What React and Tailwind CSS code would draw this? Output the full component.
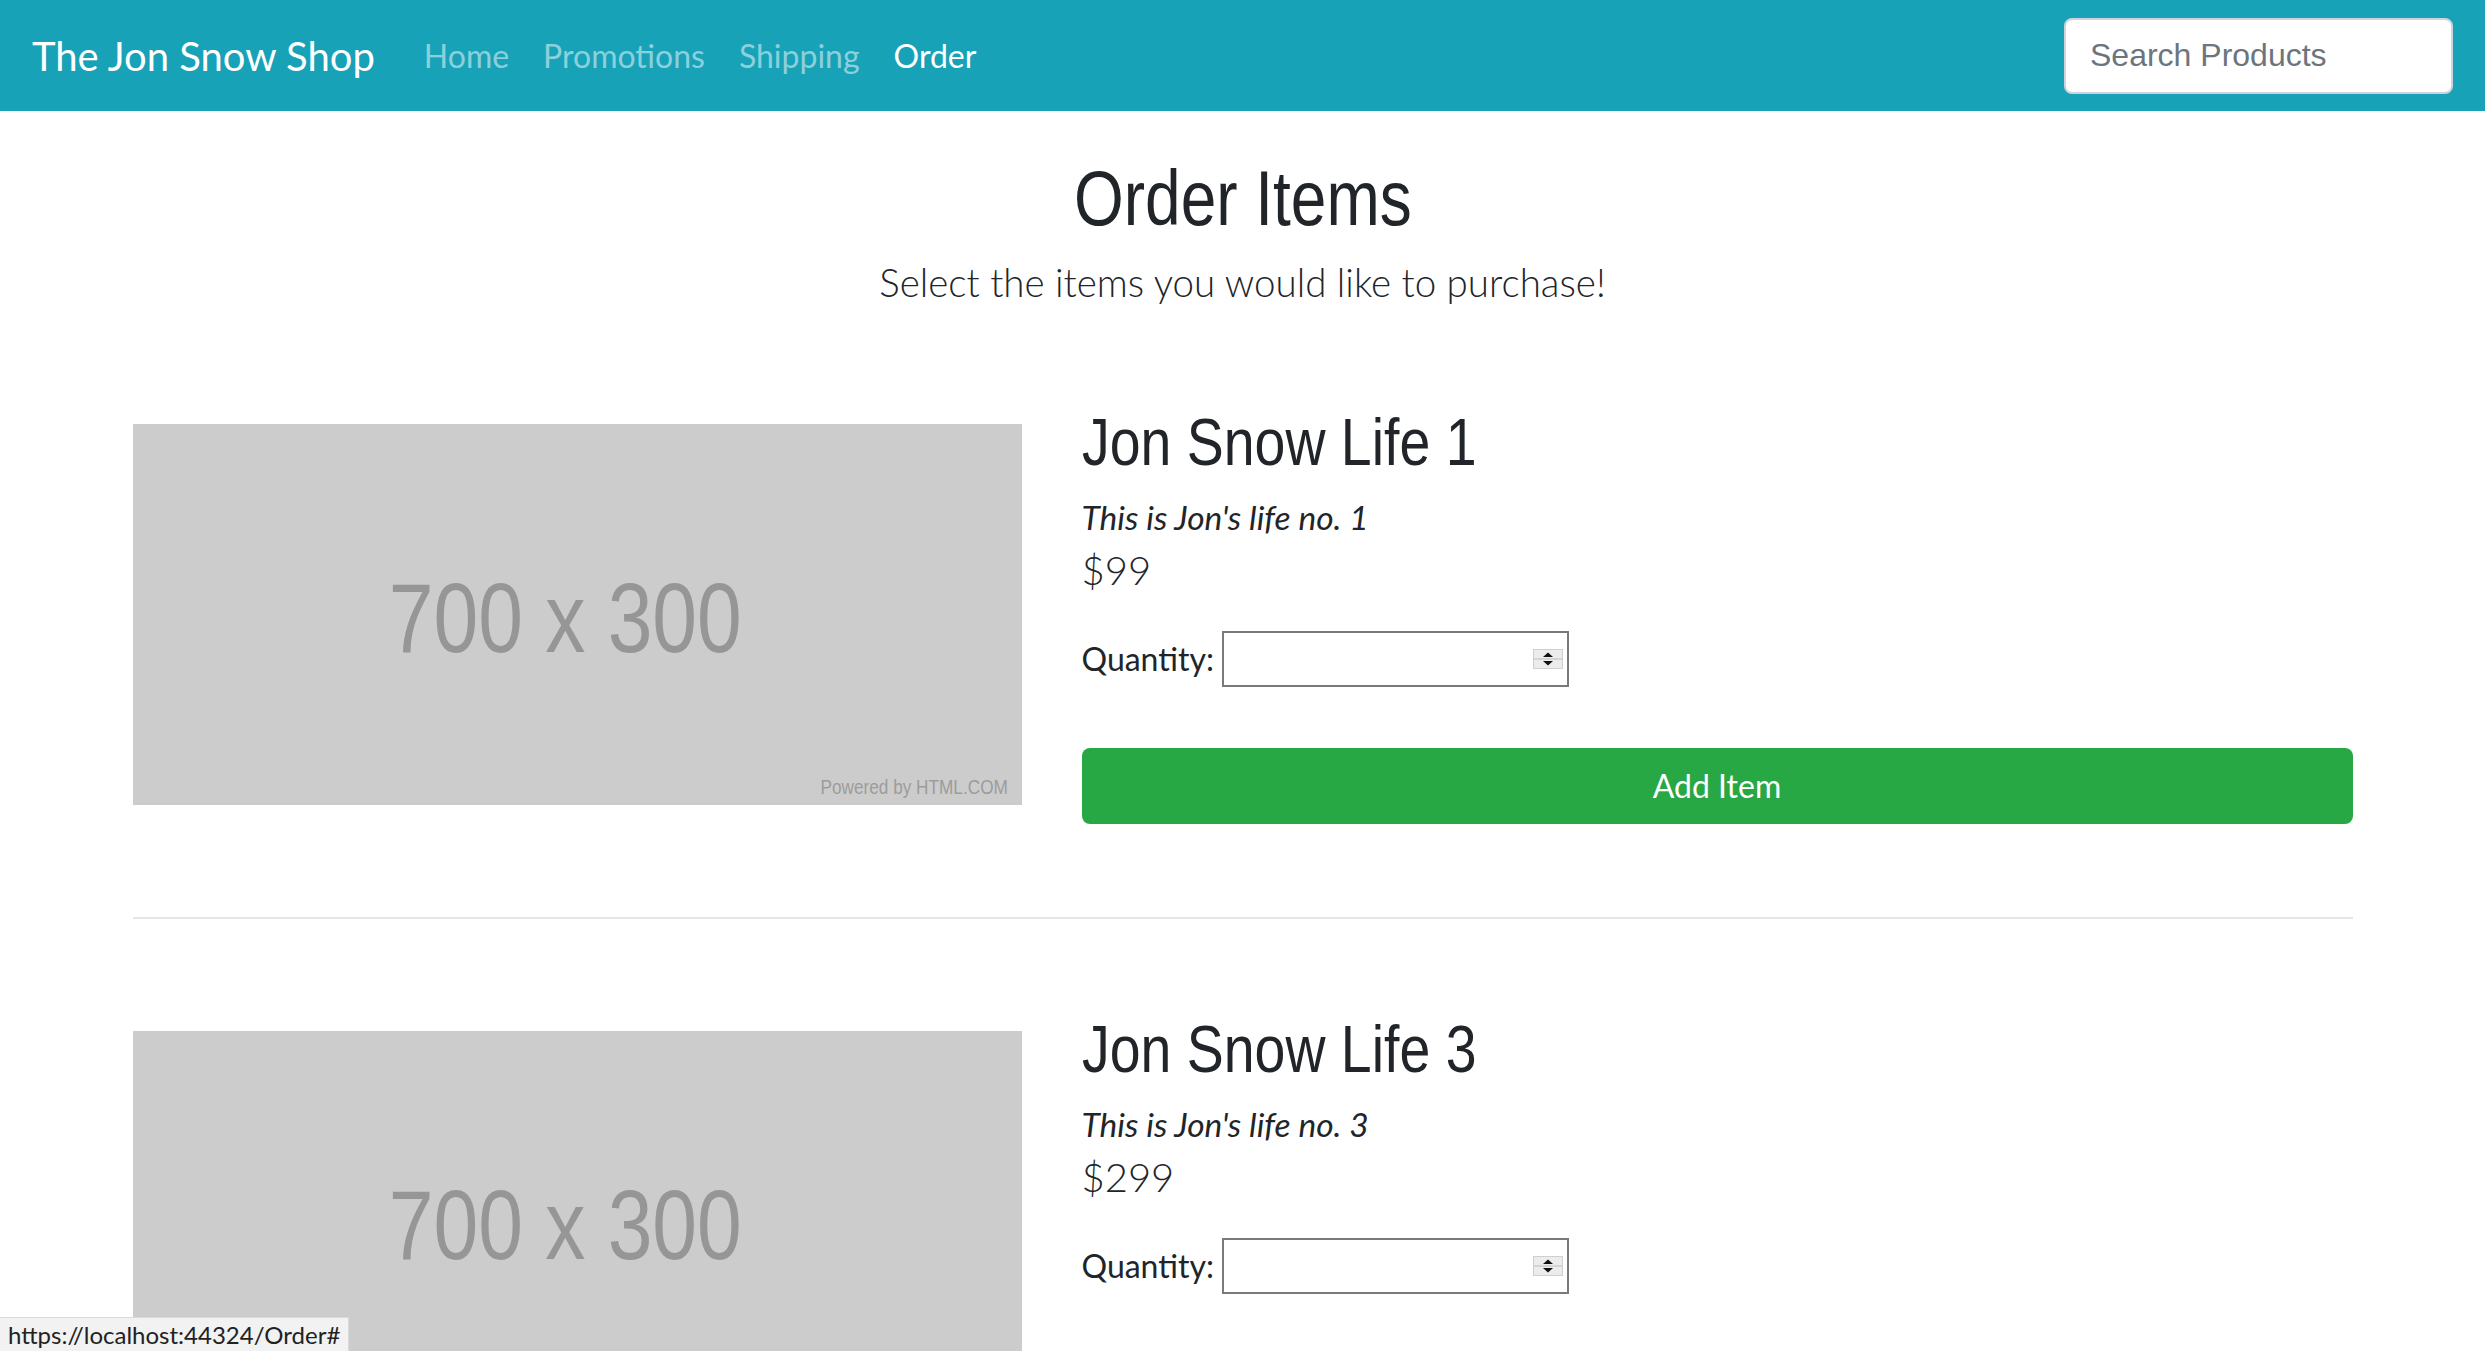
import React from 'react';

const products = [
  { id: 1, name: 'Jon Snow Life 1', description: "This is Jon's life no. 1", price: '$99' },
  { id: 3, name: 'Jon Snow Life 3', description: "This is Jon's life no. 3", price: '$299' },
];

const bodyFont = "font-['Lato','Noto_Sans',sans-serif]";
const narrowFont = "font-['Liberation_Sans_Narrow','Liberation_Sans',Arial,sans-serif]";

function Spinner() {
  return (
    <svg width="30" height="20" viewBox="0 0 30 20" className="shrink-0">
      <rect x="0.5" y="0.5" width="29" height="19" fill="#ececec" stroke="#cfcfcf" />
      <line x1="1" y1="10" x2="29" y2="10" stroke="#bdbdbd" />
      <path d="M10 8 L15 3.5 L20 8 Z" fill="#111" />
      <path d="M10 12 L15 16.5 L20 12 Z" fill="#111" />
    </svg>
  );
}

function Placeholder() {
  return (
    <div className="relative w-[889px] h-[381px] shrink-0 bg-[#cccccc] flex items-center justify-center">
      <span className={`${narrowFont} inline-block scale-x-[0.82] text-[98px] leading-none text-[#969696] mr-6 mt-2`}>
        700 x 300
      </span>
      <span className={`${narrowFont} absolute right-[14px] bottom-[8px] inline-block scale-x-[0.86] origin-right text-[20px] leading-none text-[#9c9c9c]`}>
        Powered by HTML.COM
      </span>
    </div>
  );
}

function ProductRow({ product }) {
  return (
    <div className="flex items-center gap-[60px] mt-[92px]">
      <Placeholder />
      <div className="flex-1 flex flex-col items-start">
        <h2 className={`${narrowFont} inline-block scale-x-[0.84] origin-left text-[66px] leading-[76px] text-[#212529]`}>
          {product.name}
        </h2>
        <p className="mt-[13px] text-[33.5px] leading-[48px] italic text-[#212529]">{product.description}</p>
        <p className="mt-[5px] text-[40px] leading-[48px] font-light text-[#212529]">{product.price}</p>
        <div className="mt-[37px] flex items-center gap-[8px]">
          <label className="text-[32px] leading-[48px] text-[#212529]">Quantity:</label>
          <div className="w-[347px] h-[56px] border-2 border-[#7a7a7a] bg-white flex items-center pr-[4px]">
            <input type="text" className="flex-1 min-w-0 h-full outline-none bg-transparent px-2 text-[32px]" />
            <Spinner />
          </div>
        </div>
        <button className="mt-[61px] h-[76px] w-full rounded-[8px] bg-[#28a745] text-white text-[32px] leading-none">
          Add Item
        </button>
      </div>
    </div>
  );
}

export default function App() {
  return (
    <div className={`relative h-[1351px] overflow-hidden bg-white ${bodyFont}`}>
      <nav className="h-[111px] bg-[#17a2b8] px-8 flex items-center justify-between">
        <div className="flex items-center">
          <a href="#" className="text-[40px] leading-none text-white mr-8">The Jon Snow Shop</a>
          <a href="#" className="px-[17px] text-[32px] leading-none text-white/50">Home</a>
          <a href="#" className="px-[17px] text-[32px] leading-none text-white/50">Promotions</a>
          <a href="#" className="px-[17px] text-[32px] leading-none text-white/50">Shipping</a>
          <a href="#" className="px-[17px] text-[32px] leading-none text-white">Order</a>
        </div>
        <input
          type="text"
          placeholder="Search Products"
          className="w-[389px] h-[76px] rounded-[8px] border-2 border-[#ced4da] bg-white px-[24px] text-[32px] font-['Liberation_Sans',Arial,sans-serif] placeholder:text-[#6c757d] outline-none"
        />
      </nav>

      <div className="flex flex-col items-center">
        <h1 className={`${narrowFont} inline-block scale-x-[0.82] mt-[40px] text-[78px] leading-[94px] text-[#212529]`}>
          Order Items
        </h1>
        <p className="mt-[7px] text-[38.5px] leading-[60px] font-light text-[#212529]">
          Select the items you would like to purchase!
        </p>
      </div>

      <div className="mx-auto w-[2220px]">
        <ProductRow product={products[0]} />
        <hr className="mt-[93px] border-0 h-[2px] bg-[#e5e5e5]" />
        <ProductRow product={products[1]} />
      </div>

      <div className="absolute left-0 bottom-0 h-[34px] px-[8px] flex items-center bg-[#f2f2f2] border-t border-r border-[#dadada] text-[24px] text-[#222]">
        https://localhost:44324/Order#
      </div>
    </div>
  );
}
